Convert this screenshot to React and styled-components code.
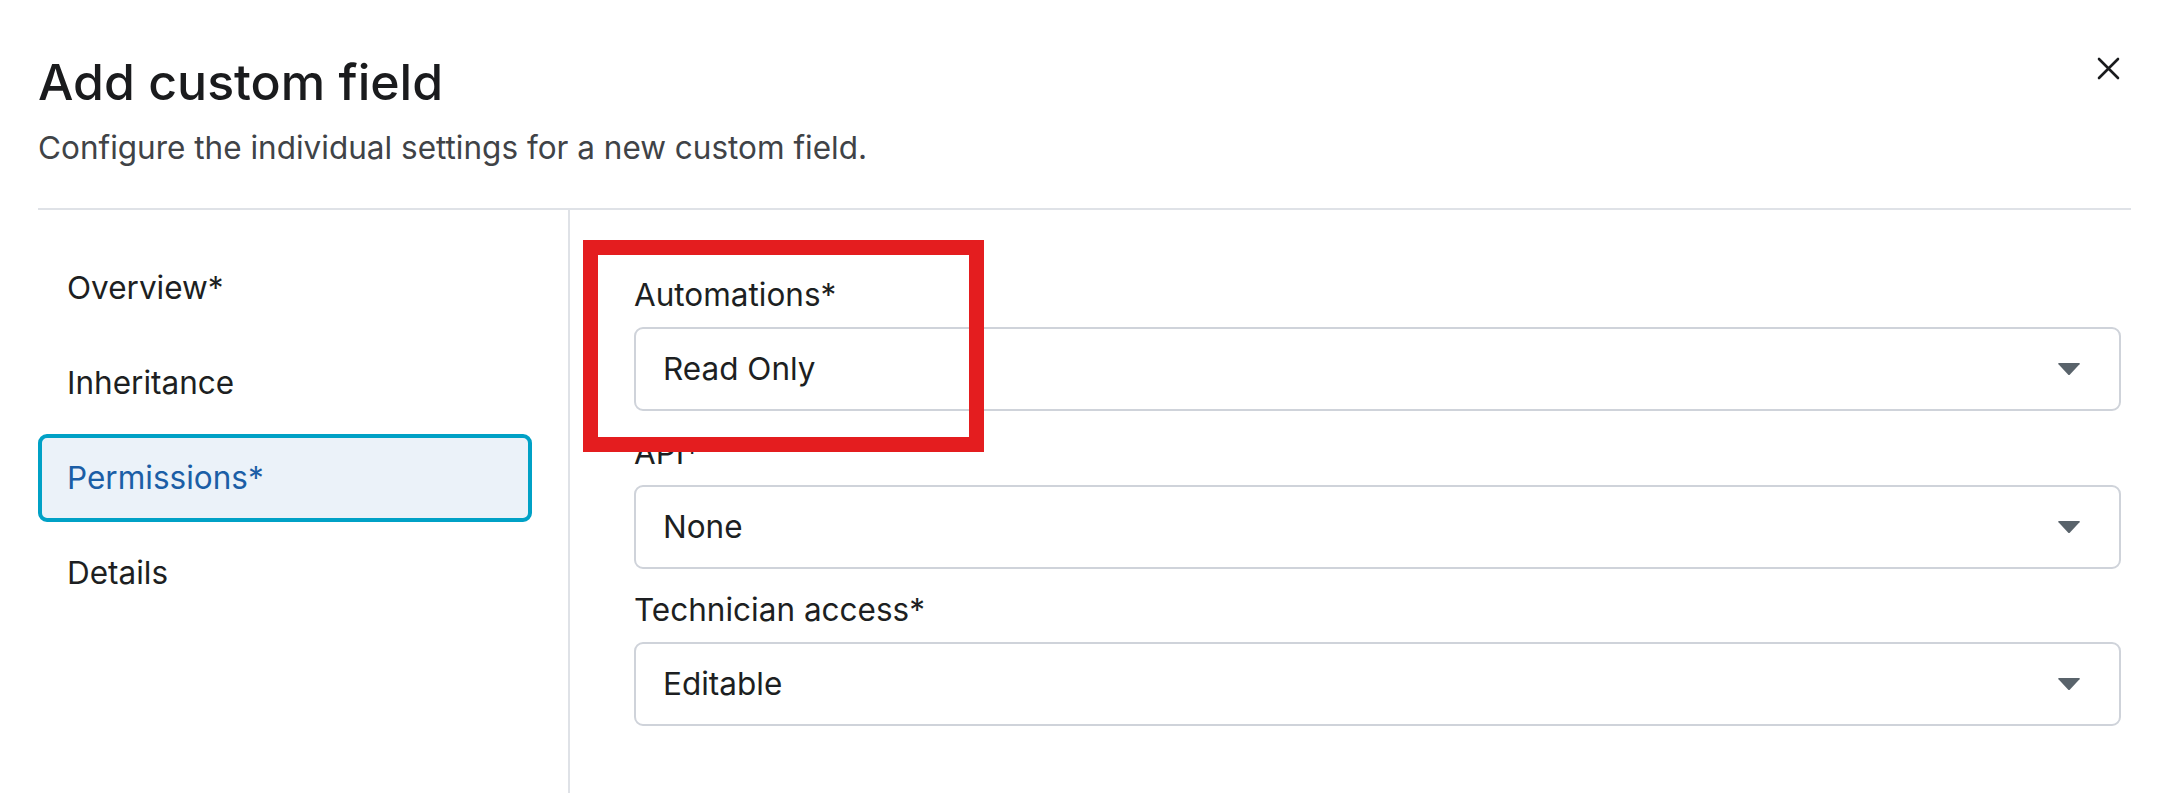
import React from 'react';
import styled, { createGlobalStyle } from 'styled-components';

const GlobalStyle = createGlobalStyle`
  html, body {
    margin: 0;
    padding: 0;
    background: #ffffff;
  }
  body {
    font-family: Inter, "Noto Sans", "Liberation Sans", sans-serif;
    color: #1d1f22;
  }
`;

const Dialog = styled.div`
  position: relative;
  width: 2157px;
  height: 793px;
  overflow: hidden;
  box-sizing: border-box;
  padding: 53px 26px 0 38px;
  display: flex;
  flex-direction: column;
`;

const Header = styled.div`
  display: flex;
  justify-content: space-between;
  align-items: flex-start;
  padding-bottom: 42px;
  border-bottom: 2px solid #dfe2e7;
`;

const Title = styled.h1`
  margin: 0;
  font-size: 50px;
  line-height: 58px;
  font-weight: 500;
  color: #1a1b1d;
`;

const Subtitle = styled.p`
  margin: 19px 0 0;
  font-size: 31.5px;
  line-height: 36px;
  color: #404347;
`;

const CloseButton = styled.button`
  border: none;
  background: transparent;
  padding: 0;
  margin: 4px 11px 0 0;
  width: 23px;
  height: 23px;
  cursor: pointer;
  display: flex;
  svg {
    display: block;
  }
`;

const Body = styled.div`
  flex: 1;
  display: grid;
  grid-template-columns: 532px 1fr;
`;

const Sidebar = styled.nav`
  border-right: 2px solid #dfe2e7;
  padding: 34px 36px 0 0;
  display: flex;
  flex-direction: column;
  gap: 7px;
`;

const NavItem = styled.button`
  box-sizing: border-box;
  height: 88px;
  width: 100%;
  display: flex;
  align-items: center;
  padding: 0 25px;
  border-radius: 9px;
  border: 4px solid ${({ $active }) => ($active ? '#00a1c6' : 'transparent')};
  background: ${({ $active }) => ($active ? '#ebf2f9' : 'transparent')};
  color: ${({ $active }) => ($active ? '#1b5ea6' : '#1d1f22')};
  font-family: inherit;
  font-size: 31.5px;
  line-height: 36px;
  text-align: left;
  cursor: pointer;
`;

const Content = styled.div`
  padding: 67px 10px 0 64px;
  display: flex;
  flex-direction: column;
  gap: 23.5px;
`;

const Field = styled.div`
  display: flex;
  flex-direction: column;
  gap: 14px;
`;

const Label = styled.label`
  font-size: 31.5px;
  line-height: 36px;
  color: #1d1f22;
`;

const Select = styled.div`
  box-sizing: border-box;
  height: 84px;
  border: 2px solid #cfd3da;
  border-radius: 9px;
  display: flex;
  align-items: center;
  justify-content: space-between;
  padding: 0 38px 0 27px;
  font-size: 31.5px;
  line-height: 36px;
  color: #1d1f22;
  background: #fff;
`;

const Highlight = styled.div`
  position: absolute;
  left: 583px;
  top: 240px;
  width: 401px;
  height: 212px;
  box-sizing: border-box;
  border: 15px solid #e41d1f;
  pointer-events: none;
`;

function Caret() {
  return (
    <svg width="24" height="14" viewBox="0 0 24 14">
      <path d="M2 1 H22 Q23.5 1 22.5 2.3 L13 12.6 Q12 13.6 11 12.6 L1.5 2.3 Q0.5 1 2 1 Z" fill="#59636b" />
    </svg>
  );
}

const fields = [
  { label: 'Automations*', value: 'Read Only' },
  { label: 'API*', value: 'None' },
  { label: 'Technician access*', value: 'Editable' },
];

const navItems = ['Overview*', 'Inheritance', 'Permissions*', 'Details'];

export default function App() {
  return (
    <>
      <GlobalStyle />
      <Dialog>
        <Header>
          <div>
            <Title>Add custom field</Title>
            <Subtitle>Configure the individual settings for a new custom field.</Subtitle>
          </div>
          <CloseButton aria-label="Close">
            <svg width="23" height="23" viewBox="0 0 23 23">
              <path d="M2 2 L21 21 M21 2 L2 21" stroke="#1a1b1d" strokeWidth="2.6" strokeLinecap="round" />
            </svg>
          </CloseButton>
        </Header>
        <Body>
          <Sidebar>
            {navItems.map((item) => (
              <NavItem key={item} $active={item === 'Permissions*'}>
                {item}
              </NavItem>
            ))}
          </Sidebar>
          <Content>
            {fields.map((f) => (
              <Field key={f.label}>
                <Label>{f.label}</Label>
                <Select>
                  <span>{f.value}</span>
                  <Caret />
                </Select>
              </Field>
            ))}
          </Content>
        </Body>
        <Highlight />
      </Dialog>
    </>
  );
}
